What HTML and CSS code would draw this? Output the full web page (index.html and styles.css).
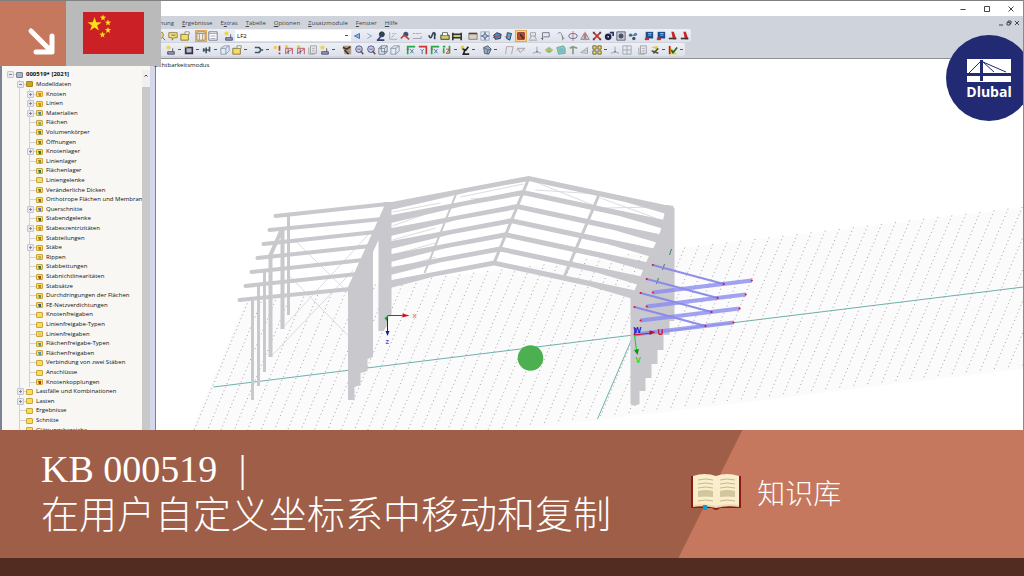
FILE: index.html
```html
<!DOCTYPE html>
<html lang="zh">
<head>
    <meta charset="UTF-8">
    <title>KB 000519</title>
    <link rel="stylesheet" href="styles.css">
</head>
<body>
    <main class="app">
        <div class="titlebar">
            <button title="Minimieren"><svg viewBox="0 0 8 8"><path d="M1.5 4.5h5"/></svg></button>
            <button title="Maximieren"><svg viewBox="0 0 8 8"><path d="M1.5 1.5h5v5h-5z"/></svg></button>
            <button title="Schließen"><svg viewBox="0 0 8 8"><path d="M1.5 1.5l5 5m0-5l-5 5"/></svg></button>
        </div>

        <nav class="menu">
            <a href="#">Berechnung</a>
            <a href="#"><u>E</u>rgebnisse</a>
            <a href="#">E<u>x</u>tras</a>
            <a href="#"><u>T</u>abelle</a>
            <a href="#"><u>O</u>ptionen</a>
            <a href="#"><u>Z</u>usatzmodule</a>
            <a href="#"><u>F</u>enster</a>
            <a href="#"><u>H</u>ilfe</a>
            <div class="mdi">
                <button title="Fenster minimieren"><svg viewBox="0 0 8 8"><path d="M2 6h4"/></svg></button>
                <button title="Fenster wiederherstellen"><svg viewBox="0 0 8 8"><path d="M2 3.5h3v2.500h-3zM3 3.500v-1.500h3v2.500h-1"/></svg></button>
                <button title="Fenster schließen"><svg viewBox="0 0 8 8"><path d="M2 2l4 4m0-4l-4 4"/></svg></button>
            </div>
        </nav>

        <div class="toolbars">
            <div class="toolbar">
                <div class="group" data-icons="zoom note folder"></div>
                <div class="group" data-icons="table* list"></div>
                <div class="group" data-icons="load"></div>
                <select class="loadcase" aria-label="Lastfall"><option>LF2</option></select>
                <div class="group" data-icons="prev next result ghost eye values"></div>
                <div class="group" data-icons="deform print film"></div>
                <div class="group" data-icons="panel target cube tilt pick* support flag"></div>
                <div class="group" data-icons="hook rotate mirror cross ball camera nodes"></div>
                <div class="group" data-icons="module module pdf pdf"></div>
            </div>
            <div class="toolbar second">
                <div class="group" data-icons="load+ frame+ member+ solid folder+"></div>
                <div class="group" data-icons="plug+ pin truss truss ghostframe load+"></div>
                <div class="group" data-icons="hand lens lens box solid"></div>
                <div class="group" data-icons="axisx axisy axisx axisz+ arrow+"></div>
                <div class="group" data-icons="poly+"></div>
                <div class="group" data-icons="portal spring"></div>
                <div class="group" data-icons="axes dome mesh plant plane windows+ axes grid"></div>
                <div class="group" data-icons="ghostframe brush+ colors+"></div>
            </div>
        </div>

        <div class="workspace">
            <aside class="sidebar">
                <ul class="tree">
                    <li class="l0 minus"><i class="doc"></i><b>000519* [2021]</b></li>
                    <li class="l1 minus"><i class="dark"></i>Modelldaten</li>
                    <li class="l2 plus"><i data-mark="#e08020"></i>Knoten</li>
                    <li class="l2 plus"><i data-mark="#d09020"></i>Linien</li>
                    <li class="l2 plus"><i data-mark="#4a8a9a"></i>Materialien</li>
                    <li class="l2"><i data-mark="#90a860"></i>Flächen</li>
                    <li class="l2"><i data-mark="#557780"></i>Volumenkörper</li>
                    <li class="l2"><i data-mark="#6d7a60"></i>Öffnungen</li>
                    <li class="l2 plus"><i data-mark="#208030"></i>Knotenlager</li>
                    <li class="l2"><i data-mark="#a08a30"></i>Linienlager</li>
                    <li class="l2"><i data-mark="#308050"></i>Flächenlager</li>
                    <li class="l2"><i data-mark="#e8d890"></i>Liniengelenke</li>
                    <li class="l2"><i data-mark="#708040"></i>Veränderliche Dicken</li>
                    <li class="l2"><i data-mark="#807040"></i>Orthotrope Flächen und Membranen</li>
                    <li class="l2 plus"><i data-mark="#6070b0"></i>Querschnitte</li>
                    <li class="l2"><i data-mark="#605820"></i>Stabendgelenke</li>
                    <li class="l2 plus"><i data-mark="#c09030"></i>Stabexzentrizitäten</li>
                    <li class="l2"><i data-mark="#a08020"></i>Stabteilungen</li>
                    <li class="l2 plus"><i data-mark="#c08020"></i>Stäbe</li>
                    <li class="l2"><i data-mark="#c0a850"></i>Rippen</li>
                    <li class="l2"><i data-mark="#507040"></i>Stabbettungen</li>
                    <li class="l2"><i data-mark="#a05010"></i>Stabnichtlinearitäten</li>
                    <li class="l2"><i data-mark="#c08020"></i>Stabsätze</li>
                    <li class="l2"><i data-mark="#609070"></i>Durchdringungen der Flächen</li>
                    <li class="l2"><i data-mark="#406070"></i>FE-Netzverdichtungen</li>
                    <li class="l2"><i></i>Knotenfreigaben</li>
                    <li class="l2"><i></i>Linienfreigabe-Typen</li>
                    <li class="l2"><i data-mark="#d8c880"></i>Linienfreigaben</li>
                    <li class="l2"><i data-mark="#5090c0"></i>Flächenfreigabe-Typen</li>
                    <li class="l2"><i data-mark="#5090c0"></i>Flächenfreigaben</li>
                    <li class="l2"><i></i>Verbindung von zwei Stäben</li>
                    <li class="l2"><i></i>Anschlüsse</li>
                    <li class="l2"><i data-mark="#c03010"></i>Knotenkopplungen</li>
                    <li class="l1 plus"><i></i>Lastfälle und Kombinationen</li>
                    <li class="l1 plus"><i></i>Lasten</li>
                    <li class="l1"><i></i>Ergebnisse</li>
                    <li class="l1"><i></i>Schnitte</li>
                    <li class="l1"><i></i>Glättungsbereiche</li>
                </ul>
                <div class="scrollbar">
                    <svg viewBox="0 0 8 17"><path d="M2.500 6.500L4 5l1.500 1.500"/></svg>
                    <div class="thumb"></div>
                </div>
            </aside>

            <section class="viewport">
                <span class="mode">Sichtbarkeitsmodus</span>
                <svg class="scene" viewBox="155 59 868 371" preserveAspectRatio="xMidYMid slice">
                    <path fill="#fbfbfc" d="M245 301L1094 199V360L174 471z"/>
                    <g id="grid"></g>

                    <!-- work plane axes -->
                    <path class="axis" d="M213 387L633 335L1023 287M633 335L597 419"/>

                    <!-- wind bracing -->
                    <path class="wire" d="M295 241L347 292M270 357L353 270M282 328L372 230M288 275L347 335M460 197L523 184M470 199L525 195M535 182L592 205M535 190L597 194M600 198L655 218M605 208L655 207M392 212L440 203M392 226L450 205M392 240L435 228M392 255L435 243M392 270L435 257"/>

                    <!-- purlins and columns of the annex -->
                    <g class="steel" stroke-width="4" stroke-linecap="round">
                        <path d="M275 216L387 204M269 230L382 219M263 244L375 232M257 258L370 246M251 272L363 260M245 286L357 274M239 300L350 289"/>
                    </g>
                    <path class="steel" stroke-width="3" d="M252 299V400M258 286V386M264 272V372M288 215V315"/>
                    <path class="steel" stroke-width="4" d="M270 357V255L282 228V329"/>

                    <!-- roof frames -->
                    <g id="rafters"></g>
                    <path class="steel" stroke-width="3" d="M528 179L494 262M598 196L564 276"/>
                    <path class="steel" stroke-width="2" d="M456 193L424 273"/>

                    <!-- main columns -->
                    <path class="mass" d="M384 202L391 202V316L387 317V325L383 331H378V240L372.500 252V357L367 359V371L360 373V385L354 387V400H347.500V287L383 208z"/>
                    <path class="mass" d="M666 205L673 206V208H674V321H669V335H663V350H657V364H651V378H645V391H639V404L634 406L630 404V298L635 288L641 274L647 259L654 246L660 231z"/>
                    <path stroke="#447a74" stroke-width="1" d="M671 249l-2 6M664 264l-2 6M658 278l-2 6"/>

                    <!-- copied members -->
                    <g id="members"></g>

                    <!-- user-defined coordinate system -->
                    <path stroke="#d01020" d="M634 335L650 333"/>
                    <path fill="#b01020" d="M649 330.500L655 332L649 335z"/>
                    <path stroke="#10d020" d="M634 335L636 350"/>
                    <path fill="#109020" d="M633.500 350L638.500 349L637 355z"/>
                    <path stroke="#2020d0" fill="none" d="M634 334L635 328"/>
                    <text x="657" y="335" fill="#d01020">U</text>
                    <text x="635" y="363" fill="#10e020">V</text>
                    <text x="633" y="333" fill="#1818e0">W</text>

                    <!-- global coordinate system -->
                    <path stroke="#d01020" d="M387 315.500H402"/>
                    <path fill="#d01020" d="M402 313.500L409 315.500L402 317.500z"/>
                    <path stroke="#1818b0" d="M387 316V331"/>
                    <path fill="#1818b0" d="M385 331H389L387 336z"/>
                    <path fill="#18a030" d="M384 318L388 315L386 321z"/>
                    <text class="small" x="412" y="318" fill="#e08090">X</text>
                    <text class="small" x="385" y="344" fill="#5858d0">Z</text>

                    <circle cx="530" cy="358" r="12.800" fill="#4caf50"/>
                </svg>
            </section>
        </div>

        <div class="corner">
            <div class="corner-arrow">
                <svg viewBox="0 0 66 66"><path d="M31 31L51 51M36 52H52V36"/></svg>
            </div>
            <div class="corner-flag">
                <svg viewBox="0 0 61 42">
                    <path fill="#cc2027" d="M0 0h61v42H0z"/>
                    <g fill="#ffde17">
                        <path d="M11.500 5L13.200 10.200H18.600L14.200 13.400L15.900 18.600L11.500 15.400L7.100 18.600L8.800 13.400L4.400 10.200H9.800z"/>
                        <path d="M20 2.500l.8 2.100 2.300.2-1.800 1.400.6 2.200-1.900-1.200-1.900 1.200.6-2.200-1.800-1.400 2.300-.2z"/>
                        <path d="M25 7.500l.8 2.100 2.300.2-1.800 1.400.6 2.200-1.900-1.200-1.900 1.200.6-2.200-1.800-1.400 2.300-.2z"/>
                        <path d="M25 15l.8 2.100 2.300.2-1.800 1.400.6 2.200-1.900-1.200-1.900 1.200.6-2.200-1.800-1.400 2.300-.2z"/>
                        <path d="M19.500 19.500l.8 2.100 2.300.2-1.800 1.400.6 2.200-1.900-1.200-1.900 1.200.6-2.200-1.800-1.400 2.300-.2z"/>
                    </g>
                </svg>
            </div>
        </div>

        <div class="logo">
            <svg viewBox="0 0 44 23">
                <path fill="#fff" d="M0 0h44v14H0zM0 17h44v6H0z"/>
                <path stroke="#212a72" stroke-width="1" fill="none" d="M14 2L2 14M16 3L27 13M16 3L39 13"/>
                <path fill="#212a72" d="M13 1h3v21h-3z"/>
            </svg>
            <span>Dlubal</span>
        </div>
    </main>

    <footer class="banner">
        <h1>KB 000519 <span class="bar">|</span><br>在用户自定义坐标系中移动和复制</h1>
        <div class="category">
            <svg viewBox="0 0 50 36">
                <path fill="#8c1c13" d="M0 2h50v32H29q-4 4-8 0H0z"/>
                <path fill="#f9edcb" d="M2 2Q14-2 25 2Q36-2 48 2V32Q36 31 25 33Q14 31 2 32z"/>
                <path fill="#e9d9b0" d="M2 31Q14 29 25 32Q36 29 48 31V33Q36 31 25 34Q14 31 2 33z"/>
                <path fill="#d3c59c" d="M7 17q8-2 15 0v6q-7-1-15 0zM29 17q7-2 15 0v6q-8-1-15 0z"/>
                <path stroke="#c5b78e" fill="none" d="M7 6q8-2 15 0M7 10q8-2 15 0M7 14q8-2 15 0M7 27q8-2 15 0M29 6q7-2 15 0M29 10q7-2 15 0M29 14q7-2 15 0M29 27q7-2 15 0"/>
                <path fill="#0c9ddb" d="M12 31h4v5h-4z"/>
            </svg>
            <span>知识库</span>
        </div>
    </footer>
    <div class="strip"></div>

    <script src="script.js"></script>
</body>
</html>
```
FILE: styles.css
```css
* {
    box-sizing: border-box;
}

body {
    margin: 0;
    height: 100vh;
    display: flex;
    flex-direction: column;
    font-family: "Open Sans", "Noto Sans", sans-serif;
    font-size: 6px;
    color: #111;
}

button {
    padding: 0;
    border: 0;
    background: none;
    cursor: pointer;
}

svg {
    display: block;
}

.app {
    position: relative;
    flex: 1;
    min-height: 0;
    display: flex;
    flex-direction: column;
    overflow: hidden;
    background-color: white;
    border-top: 1px solid #808080;
    border-right: 1px solid #8a8a8a;
}

/* title bar and menu */
.titlebar {
    height: 15px;
    display: flex;
    justify-content: flex-end;
    align-items: center;
    gap: 16px;
    padding-right: 8px;
}

.titlebar svg,
.mdi svg {
    width: 8px;
    height: 8px;
    fill: none;
    stroke: #444;
}

.menu {
    height: 13px;
    display: flex;
    align-items: center;
    gap: 8px;
    background-color: #cfd3dc;
}

.menu a {
    color: #444;
    text-decoration: none;
}

.menu a:first-child {
    width: 174px;
    text-align: right;
}

.mdi {
    margin-left: auto;
    display: flex;
    padding-right: 2px;
}

/* toolbars */
.toolbars {
    display: flex;
    flex-direction: column;
    align-items: flex-start;
    gap: 1px;
    padding-bottom: 2px;
    background-color: #cfd3dc;
    border-bottom: 1px solid #8d8f93;
}

.toolbar {
    height: 13px;
    display: flex;
    align-items: center;
    gap: 4px;
    padding-left: 155px;
    background-image: linear-gradient(#eef0f6, #dde1eb);
    border-radius: 2px;
}

.second {
    padding-left: 165px;
}

.group {
    display: flex;
}

.group + .loadcase {
    margin-left: -4px;
}

.loadcase + .group {
    margin-left: -4px;
}

.loadcase {
    width: 116px;
    height: 11px;
    padding: 0 2px;
    border: 0;
    appearance: none;
    background-color: white;
    background-image: linear-gradient(#555, #555);
    background-size: 3px 1px;
    background-position: right 3px center;
    background-repeat: no-repeat;
    font-family: inherit;
    font-size: 6px;
}

.tool {
    display: flex;
    align-items: center;
    width: 12px;
    height: 12px;
}

.tool svg {
    flex: none;
    width: 12px;
    height: 12px;
    padding: 1px;
}

.tool.active {
    background-color: #fbd38a;
    box-shadow: inset 0 0 0 1px #e0a85a;
}

.tool.more {
    width: 18px;
}

.tool.more::after {
    content: "";
    width: 3px;
    height: 1px;
    margin-left: 1px;
    background-color: #555;
}

/* navigator */
.workspace {
    flex: 1;
    min-height: 0;
    display: flex;
}

.sidebar {
    width: 156px;
    flex: none;
    display: flex;
    overflow: hidden;
    padding-top: 11px;
    padding-right: 5px;
    border-left: 2px solid #7c8294;
    border-right: 1px solid #7d8088;
    background: linear-gradient(to right, #f8f7f3 148px, #d5d8ea 148px);
}

.tree {
    flex: 1;
    min-width: 0;
    height: calc(100% + 5px);
    margin: 0;
    padding: 0;
    list-style: none;
    display: grid;
    grid-auto-rows: 1fr;
    overflow: hidden;
}

.tree li {
    position: relative;
    display: flex;
    align-items: center;
    gap: 3px;
    line-height: 9px;
    white-space: nowrap;
    background-image: linear-gradient(#d2d2d2, #d2d2d2), linear-gradient(#d2d2d2, #d2d2d2), linear-gradient(#d2d2d2, #d2d2d2);
    background-repeat: no-repeat;
    background-size: 1px 100%, 8px 1px, 0 0;
}

.tree .l0 {
    padding-left: 14px;
    background-size: 0 0, 6px 1px, 0 0;
    background-position: 0 0, 8px center, 0 0;
}

.tree .l1 {
    padding-left: 24px;
    background-position: 17px 0, 17px center, 0 0;
}

.tree .l2 {
    padding-left: 34px;
    background-size: 1px 100%, 8px 1px, 1px 100%;
    background-position: 27px 0, 27px center, 17px 0;
}

.minus::before,
.plus::before {
    content: "";
    position: absolute;
    width: 5px;
    height: 5px;
    border: 1px solid #c3c5d0;
    border-radius: 1px;
    background: linear-gradient(#889, #889) center / 3px 1px no-repeat #e8e9ef;
}

.plus::before {
    background: linear-gradient(#889, #889) center / 3px 1px no-repeat, linear-gradient(#889, #889) center / 1px 3px no-repeat #e8e9ef;
}

.l0::before {
    left: 5px;
}

.l1::before {
    left: 15px;
}

.l2::before {
    left: 25px;
}

.tree i {
    flex: none;
    width: 7px;
    height: 6px;
    display: flex;
    align-items: center;
    justify-content: center;
    border: 1px solid #c9a53a;
    border-radius: 1px;
    background-color: #fbdc55;
}

.tree i.doc {
    border-color: #7b8296;
    background-color: #a9b3cc;
}

.tree i.dark {
    background-color: #c9a520;
    border-color: #a58a1c;
}

.scrollbar {
    width: 8px;
    display: flex;
    flex-direction: column;
    background-color: #f0f0f0;
}

.scrollbar svg {
    width: 8px;
    height: 17px;
    fill: none;
    stroke: #444;
}

.thumb {
    flex: 1;
    background-color: #c9c9c9;
}

/* model view */
.viewport {
    position: relative;
    flex: 1;
    min-width: 0;
}

.mode {
    position: absolute;
    top: 2px;
    left: -2px;
    line-height: 8px;
}

.scene {
    width: 100%;
    height: 100%;
}

.scene text {
    font-size: 8px;
    font-weight: bold;
}

.scene .small {
    font-size: 6px;
}

.axis {
    fill: none;
    stroke: #6fb0aa;
}

.wire {
    fill: none;
    stroke: #dcdce0;
}

.steel {
    fill: none;
    stroke: #c8c8cd;
}

.mass {
    fill: #c8c8cd;
}

.dots {
    stroke: #a0a0a4;
    stroke-dasharray: 1 3;
}

.beam {
    stroke: #8c8cf0;
    stroke-width: 4;
    opacity: 0.8;
}

.brace {
    stroke: #8484ea;
    stroke-width: 2;
    opacity: 0.9;
}

/* overlays */
.corner {
    position: absolute;
    top: -1px;
    left: 0;
    display: flex;
    height: 66px;
}

.corner-arrow {
    width: 66px;
    background-color: #c5785d;
}

.corner-arrow path {
    fill: none;
    stroke: white;
    stroke-width: 5;
    stroke-linecap: round;
    stroke-linejoin: round;
}

.corner-flag {
    width: 95px;
    display: flex;
    align-items: center;
    justify-content: center;
    background-color: #bababa;
}

.corner-flag svg {
    width: 61px;
    height: 42px;
}

.logo {
    position: absolute;
    top: 34px;
    right: -9px;
    width: 86px;
    height: 86px;
    display: flex;
    flex-direction: column;
    align-items: center;
    padding-top: 24px;
    border-radius: 50%;
    background-color: #212a72;
    color: white;
    font-size: 14px;
    font-weight: bold;
    line-height: 20px;
}

.logo svg {
    width: 44px;
    height: 23px;
}

/* banner */
.banner {
    position: relative;
    height: 128px;
    flex: none;
    display: flex;
    align-items: center;
    padding-bottom: 4px;
    background-color: #c5785d;
    color: white;
    font-family: "Liberation Serif", "Noto Sans CJK SC", serif;
}

.banner::before {
    content: "";
    position: absolute;
    top: 0;
    left: 0;
    width: 72.5%;
    height: 100%;
    background-color: #9e5e48;
    clip-path: polygon(0 0, 100% 0, calc(100% - 64px) 100%, 0 100%);
}

.banner h1 {
    position: relative;
    width: 67.5%;
    margin: 0;
    padding-left: 41px;
    font-size: 38px;
    font-weight: 300;
    line-height: 46px;
    white-space: nowrap;
}

.bar {
    padding-left: 12px;
}

.category {
    position: relative;
    display: flex;
    align-items: center;
    gap: 16px;
    font-size: 28px;
    font-weight: 300;
}

.category svg {
    width: 50px;
    height: 36px;
}

.strip {
    height: 18px;
    flex: none;
    background-color: #522c20;
}
```
FILE: script.js
```js
// toolbar icons, drawn on a 12x12 grid
const icons = {
    zoom: '<circle cx="5" cy="5" r="4" fill="#f0d060" stroke="#886"/><path d="M8 8l3 3" stroke="#555"/>',
    note: '<path d="M1 2h10v6H7l-2 3V8H1z" fill="#f6e27a" stroke="#887733"/><path d="M4 5h5" stroke="#557"/>',
    folder: '<path d="M1 4h9v7H1z" fill="#f7dc60" stroke="#776a30"/><path d="M6 1h5v3H6z" fill="#fff" stroke="#886"/>',
    table: '<path d="M1 1h10v10H1z" fill="#f6efe0" stroke="#876"/><path d="M1 3h10M4 3v8M8 3v8" stroke="#987"/>',
    list: '<path d="M1 1h10v10H1z" fill="#fff" stroke="#667"/><path d="M1 3h10M3 6h6M3 9h6" stroke="#99a"/>',
    load: '<circle cx="3" cy="3" r="2.500" fill="#f0d838"/><path d="M2 8h8v3H2zM8 4v4" fill="#99b" stroke="#446"/>',
    prev: '<path d="M9 3L3 6l6 3z" fill="#8fb4e8" stroke="#36a"/>',
    next: '<path d="M4 3l5 3-5 3" fill="none" stroke="#7a9ac8"/>',
    result: '<circle cx="7" cy="4" r="3" fill="#345" stroke="#234"/><path d="M2 11l4-5M1 11h9" stroke="#347" stroke-width="2"/>',
    ghost: '<path d="M2 1v9h9M5 3h2m1 0h2M4 8l4-4" fill="none" stroke="#aaa"/>',
    eye: '<circle cx="7" cy="4" r="3" fill="#357"/><path d="M1 9l4-4 6 5" fill="none" stroke="#b44" stroke-width="2"/>',
    values: '<path d="M1 3h3m1 0h3m1 0h2M1 9h10V6" fill="none" stroke="#99a"/>',
    deform: '<path d="M1 5q2 6 4 0t4 0M8 2v8" fill="none" stroke="#345" stroke-width="2"/>',
    print: '<path d="M1 5h10v5H1z" fill="#cc6" stroke="#333"/><path d="M3 5V2h6v3" fill="#fff" stroke="#555"/>',
    film: '<path d="M1 2v9M11 2v9M1 4h10M1 8h10" stroke="#333" stroke-width="2"/><path d="M2 6h8" stroke="#cc6" stroke-width="2"/>',
    panel: '<path d="M1 3h10v7H1z" fill="#d8d0c0" stroke="#777"/><path d="M1 3h10" stroke="#543" stroke-width="2"/>',
    target: '<path d="M1 1h10v10H1z" fill="none" stroke="#99a6bb"/><path d="M6 1v10M1 6h10" stroke="#346"/><path d="M6 3l3 3-3 3-3-3z" fill="#aac4ee" stroke="#346"/>',
    cube: '<path d="M2 5l4-3 5 2-1 5-6 1z" fill="#4a90c8" stroke="#223"/><path d="M1 8l10-3" stroke="#b33"/>',
    tilt: '<path d="M4 2l5 1-2 8-4-2z" fill="#58a8dc" stroke="#234"/><path d="M1 7h4" stroke="#c44"/>',
    pick: '<path d="M2 2h8v8H2z" fill="#c43" stroke="#722"/><path d="M5 4l4 5" stroke="#234" stroke-width="2"/>',
    support: '<path d="M3 2h6v4H3zM2 10l2-4m6 4l-2-4M1 11h10" fill="none" stroke="#999"/>',
    flag: '<path d="M3 11V2h8v5H4M1 9h3" fill="none" stroke="#667"/>',
    hook: '<path d="M2 3q4-3 5 2t3 4M8 6v5" fill="none" stroke="#777"/>',
    rotate: '<ellipse cx="6" cy="6" rx="5" ry="3" fill="none" stroke="#558"/><path d="M6 0v12" stroke="#c66"/>',
    mirror: '<path d="M5 3v7H1zM7 3v7h4z" fill="#ddd" stroke="#777"/><path d="M6 1v10" stroke="#c44"/>',
    cross: '<path d="M2 2l8 8m0-8l-8 8" stroke="#b33" stroke-width="2"/><path d="M1 1h2v2H1zM9 1h2v2H9zM1 9h2v2H1zM9 9h2v2H9z" fill="#444"/>',
    ball: '<circle cx="5" cy="7" r="4" fill="#224"/><path d="M7 2h4v4" fill="none" stroke="#236" stroke-width="2"/><circle cx="5" cy="7" r="1" fill="#eef"/>',
    camera: '<path d="M1 1h10v10H1z" fill="#ccd" stroke="#556"/><circle cx="6" cy="6" r="3" fill="#456"/>',
    nodes: '<circle cx="3" cy="5" r="2" fill="#478"/><circle cx="9" cy="4" r="2" fill="#58c"/><circle cx="7" cy="9" r="2" fill="#356"/><path d="M3 5h6" stroke="#356"/>',
    module: '<path d="M2 1h9v8H2z" fill="#1c4f8c"/><path d="M5 3h4M5 5h4" stroke="#9cf"/><path d="M1 8h5v3H1z" fill="#b33"/>',
    pdf: '<path d="M4 1h3l3 9H6z" fill="#c22"/><path d="M1 9h9" stroke="#433" stroke-width="2"/>',
    frame: '<path d="M2 3h8v7H2z" fill="#bbc" stroke="#334" stroke-width="2"/><path d="M1 1h3v2H1z" fill="#ec4"/>',
    member: '<path d="M2 4v4M5 3v7M9 2v6M2 6h8" stroke="#456" stroke-width="2"/>',
    solid: '<path d="M1 4h6v7H1zM1 4l4-3h6v6l-4 4M7 4l4-3" fill="#e4ebf4" stroke="#8090a8"/>',
    plug: '<path d="M1 3h5q4 3 0 6H1M8 6h3" fill="none" stroke="#456" stroke-width="2"/>',
    pin: '<circle cx="4" cy="3" r="2" fill="#ec4"/><path d="M9 1v6M9 9v2" stroke="#b33" stroke-width="2"/>',
    truss: '<circle cx="3" cy="2" r="2" fill="#ec4"/><path d="M2 11V4h8v7M2 10l8-5" fill="none" stroke="#b44"/><path d="M5 5v6" stroke="#447"/>',
    ghostframe: '<path d="M3 1h7v9H3zM1 3v8h7M5 4h3M5 7h3" fill="none" stroke="#999"/>',
    hand: '<path d="M1 1h10v10H3z" fill="#a98"/><path d="M1 3l5 2 4-3M3 6l5 5" fill="none" stroke="#432" stroke-width="2"/>',
    lens: '<circle cx="6" cy="5" r="4" fill="#bcd0f0" stroke="#447"/><path d="M8 7l3 4" stroke="#753" stroke-width="2"/><path d="M4 5h4" stroke="#c33"/>',
    box: '<path d="M1 4h7v7H1zM1 4l3-3h7v7l-3 3M8 4l3-3M4 1v7h7" fill="none" stroke="#678"/>',
    axisx: '<path d="M2 11V2h9" fill="none" stroke="#2a4" stroke-width="2"/><path d="M5 5l4 5m0-5l-4 5" stroke="#36a"/><path d="M1 5h3" stroke="#c33"/>',
    axisy: '<path d="M1 2h9v9" fill="none" stroke="#c33" stroke-width="2"/><path d="M3 5l2 2 2-2M5 7v4" fill="none" stroke="#36a"/>',
    axisz: '<path d="M1 2h3M2 4v6M9 1v9" stroke="#2a4" stroke-width="2"/><path d="M5 5h4l-4 5h4" fill="none" stroke="#c33"/>',
    arrow: '<path d="M1 1h4v4H1z" fill="#ec4"/><path d="M3 5l4 1 3-4M6 6l-2 5h7" fill="none" stroke="#222" stroke-width="2"/>',
    poly: '<path d="M2 3l5-2 4 4-3 6-5-1z" fill="#9ab" stroke="#456"/><path d="M2 3l5 3 4-1M7 6l-1 5" fill="none" stroke="#567"/>',
    portal: '<path d="M2 11l1-9h8l-2 9" fill="none" stroke="#a99"/>',
    spring: '<path d="M1 4h10M1 7q2-4 3 0t3 0 3 0" fill="none" stroke="#999"/>',
    axes: '<path d="M6 2v6l-5 2M6 8l5 2" fill="none" stroke="#89a"/><circle cx="6" cy="8" r="1" fill="#c55"/>',
    dome: '<path d="M1 6l5-4 5 4-5 4z" fill="#7cc890"/><path d="M2 6h8" stroke="#e8b040" stroke-width="2"/><path d="M3 8h6" stroke="#5ad"/>',
    mesh: '<path d="M1 3l8-2 2 3v6l-8 1z" fill="#8fd0a0" stroke="#5a9"/><path d="M3 4h6v5H4z" fill="#79b8d8"/>',
    plant: '<path d="M6 11V3M2 4l4-2 5 2" fill="none" stroke="#8a9a8a" stroke-width="2"/>',
    plane: '<path d="M1 9l8-6v7zM4 7h5" fill="none" stroke="#999"/>',
    windows: '<path d="M1 1h4v4H1zM7 1h4v4H7zM1 7h4v4H1zM7 7h4v4H7z" fill="#f0dc50" stroke="#554"/>',
    grid: '<path d="M1 1h10v10H1zM1 6h10M6 1v10" fill="none" stroke="#9aa0ac"/>',
    brush: '<path d="M1 3l8-2v4z" fill="#dc4"/><path d="M2 7l8 3M4 10l6-6" stroke="#554" stroke-width="2"/>',
    colors: '<path d="M1 1v10h10z" fill="#e8d030"/><path d="M1 1h2v10H1z" fill="#b22"/><path d="M4 6l2 3 5-6" fill="none" stroke="#262" stroke-width="2"/>'
};

// "*" marks a pressed button, "+" one with a drop-down
document.querySelectorAll('.group').forEach(group => {
    group.innerHTML = group.dataset.icons.split(' ').map(item => {
        const name = item.replace(/[*+]/, '');
        const cls = item.endsWith('*') ? ' active' : item.endsWith('+') ? ' more' : '';
        return `<button class="tool${cls}" title="${name}"><svg viewBox="0 0 12 12">${icons[name]}</svg></button>`;
    }).join('');
});

document.querySelectorAll('.tree i[data-mark]').forEach(icon => {
    icon.innerHTML = `<svg width="4" height="4" viewBox="0 0 4 4"><path d="M0 1h3v3H1z" fill="${icon.dataset.mark}"/></svg>`;
});

// dotted lines of the work plane
let lines = '';
for (let k = 0; k < 61; k++) {
    const x = 1092 - k * 14.06;
    const y = 207 + 0.12 * (1022 - x);
    lines += `<path class="dots" d="M${x} ${y}l-71 169"/>`;
}
document.getElementById('grid').innerHTML = lines;

// seven roof frames, front one first; all end at the left column line
let rafters = '';
for (let i = 0; i < 7; i++) {
    const x = 493.5 + i * 5.8;
    const y = 260.5 - i * 14.1;
    const left = 386 - x;
    const drop = -left * 0.19;
    rafters += `<path class="mass" d="M${x} ${y}l141.500 30l3 10l-48-14l-96.500-21
        L${x - 60} ${y + 16}L386 ${y + drop + 8}V${y + drop}z"/>`;
}
document.getElementById('rafters').innerHTML = rafters;

let members = '';
for (let i = 0; i < 4; i++) {
    const x = 634 + i * 6.1;
    const y = 334.5 - i * 14;
    members += `<path class="beam" d="M${x} ${y}l99-12"/>
        <path class="brace" d="M${x} ${y - 27.5}l71 19"/>`;
    [[0, 0], [99, -12], [0, -27.5], [71, -8.5]].forEach(([dx, dy]) => {
        members += `<circle cx="${x + dx}" cy="${y + dy}" r="1.100" fill="#d81838"/>`;
    });
}
document.getElementById('members').innerHTML = members;
```
